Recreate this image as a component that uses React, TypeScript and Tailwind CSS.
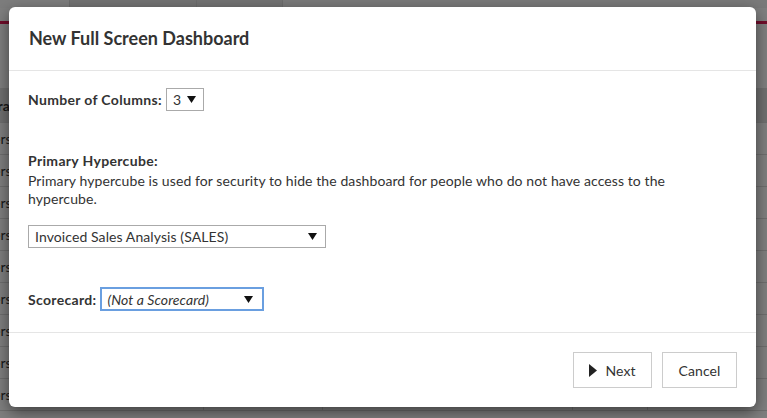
import React from "react";

const rows = ["Users", "Users", "Users", "Users", "Users", "Users", "Users", "Users", "Users"];

function Caret({ className = "" }: { className?: string }) {
  return (
    <svg width="9" height="7" viewBox="0 0 9 7" className={className}>
      <polygon points="0,0 9,0 4.5,7" fill="#111" />
    </svg>
  );
}

function Background() {
  return (
    <div className="flex flex-col font-['Lato',sans-serif] text-[14px] text-[#333]">
      {/* tabs (mostly off-screen) */}
      <div className="-mt-[22px] flex h-[30px] bg-[#f4f4f4]">
        <div className="flex w-[70px] items-end justify-end border-r border-[#d8d8d8] bg-[#fafafa] pr-3 pb-[6px]">
          Dashboards
        </div>
        <div className="flex w-[127px] items-end justify-center border-r border-[#d8d8d8] bg-[#e6e6e6] pb-[6px]">
          Hypercubes
        </div>
        <div className="flex w-[86px] items-end justify-center border-r border-[#d8d8d8] bg-[#e6e6e6] pb-[6px]">
          Admin
        </div>
      </div>
      <div className="h-[13px] bg-white" />
      <div className="h-[3px] bg-[#e01a55]" />
      <div className="h-[64px] bg-white" />
      {/* table */}
      <div className="flex h-[35px] items-center border-b border-[#ddd] bg-[#e0e0e0] font-bold">
        <span className="-ml-[18px]">Para</span>
      </div>
      {rows.map((r, i) => (
        <div key={i} className="flex h-[32px] border-b border-[#ddd] bg-white">
          <div className="flex w-[204px] items-center border-r border-[#ddd]">
            <span className="-ml-[23px]">{r}</span>
          </div>
          <div className="w-[119px] border-r border-[#ddd]" />
          <div className="w-[250px] border-r border-[#ddd]" />
          <div className="w-[75px] border-r border-[#ddd]" />
        </div>
      ))}
    </div>
  );
}

export default function App() {
  return (
    <div className="relative h-[418px] w-[767px] overflow-hidden bg-white">
      <Background />
      <div className="absolute inset-0 bg-black/50 pl-[9px] pt-[7px]">
        <div className="flex h-[400px] w-[747px] flex-col rounded-[6px] bg-white font-['Lato',sans-serif] text-[14px] tracking-[0.09px] text-[#333] shadow-[0_5px_15px_rgba(0,0,0,0.5)]">
          {/* header */}
          <div className="flex h-[64px] items-center border-b border-[#e5e5e5] px-[20px]">
            <h4 className="text-[18px] font-bold tracking-normal">New Full Screen Dashboard</h4>
          </div>

          {/* body */}
          <div className="flex h-[261px] flex-col px-[19px] pt-[17px]">
            <div className="flex h-[23px] items-center">
              <span className="font-bold tracking-[0.33px]">Number of Columns:</span>
              <div className="ml-[4px] flex h-[23px] w-[38px] items-center justify-between border border-[#aaa] pl-[6px] pr-[7px]">
                <span>3</span>
                <Caret />
              </div>
            </div>

            <div className="mt-[41px] leading-[18px]">
              <div className="font-bold tracking-[0.33px]">Primary Hypercube:</div>
              <div className="mt-[2px]">
                Primary hypercube is used for security to hide the dashboard for people who do not have access to the
                <br />
                hypercube.
              </div>
            </div>

            <div className="mt-[17px] flex h-[23px] w-[298px] items-center justify-between border border-[#aaa] pl-[6px] pr-[8px]">
              <span>Invoiced Sales Analysis (SALES)</span>
              <Caret />
            </div>

            <div className="mt-[39px] flex h-[24px] items-center">
              <span className="font-bold tracking-[0.33px]">Scorecard:</span>
              <div className="ml-[3px] flex h-[24px] w-[164px] items-center justify-between border-2 border-[#6a9fe0] pl-[6px] pr-[9px]">
                <span className="italic">(Not a Scorecard)</span>
                <Caret />
              </div>
            </div>
          </div>

          {/* footer */}
          <div className="flex flex-1 items-center justify-end gap-[10px] border-t border-[#e5e5e5] pr-[19px]">
            <button className="flex h-[36px] w-[79px] items-center justify-center gap-[8px] border border-[#ccc] bg-white text-[#333]">
              <svg width="8" height="13" viewBox="0 0 8 13">
                <polygon points="0,0 8,6.5 0,13" fill="#222" />
              </svg>
              <span>Next</span>
            </button>
            <button className="flex h-[36px] w-[75px] items-center justify-center border border-[#ccc] bg-white text-[#333]">
              Cancel
            </button>
          </div>
        </div>
      </div>
    </div>
  );
}
